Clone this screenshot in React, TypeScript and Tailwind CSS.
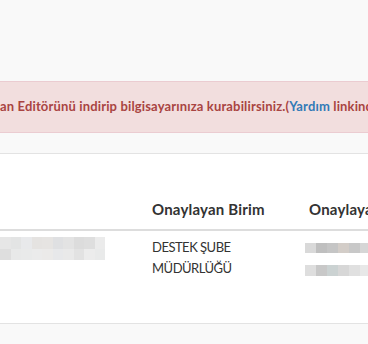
const blurA = [
  ["bg-[#e6e6e6]", "bg-[#e3e4e4]", "bg-[#e8e9eb]", "bg-[#e5e3e1]", "bg-[#e6e4e2]", "bg-[#dfe0e2]", "bg-[#e3e3e3]", "bg-[#dcdcdc]", "bg-[#dedede]", "bg-[#ebebeb]"],
  ["bg-[#dedede]", "bg-[#e8e9e9]", "bg-[#e9eaea]", "bg-[#ebebeb]", "bg-[#ebeae9]", "bg-[#e7e8ea]", "bg-[#e9e9e9]", "bg-[#e2e2e2]", "bg-[#ececec]", "bg-[#e9eaea]"],
];

const blurB = [
  ["bg-[#d9d9d9]", "bg-[#bfbfbf]", "bg-[#c5c5c5]", "bg-[#d3cdc8]", "bg-[#c8c8c8]", "bg-[#d6d6d6]"],
  ["bg-[#dedede]", "bg-[#c8c8c8]", "bg-[#cbd2d2]", "bg-[#d7d7d7]", "bg-[#e0e0e0]", "bg-[#e8e8e8]"],
];

function Blur({ rows, cell, h }: { rows: string[][]; cell: string; h: string }) {
  return (
    <div className="flex flex-col">
      {rows.map((r, i) => (
        <div key={i} className="flex">
          {r.map((c, j) => (
            <div key={j} className={`${cell} ${h} ${c}`} />
          ))}
        </div>
      ))}
    </div>
  );
}

export default function App() {
  return (
    <div className="min-h-[344px] w-full overflow-hidden bg-[#f9f9f9] font-['Lato','Liberation_Sans',sans-serif] text-[#333]">
      <div className="h-[81px]" />

      {/* uyarı */}
      <div className="flex h-[52px] items-center overflow-hidden whitespace-nowrap border-y border-[#ebccd1] bg-[#f2dede] text-[13px] font-bold tracking-[0.15px] text-[#a94442]">
        an Editörünü indirip bilgisayarınıza kurabilirsiniz.(
        <span className="text-[#337ab7]">Yardım</span>
        &nbsp;linkinden kurulum adımlarına ulaşabilirsiniz.)
      </div>

      <div className="h-[20px]" />

      {/* tablo paneli */}
      <div className="h-[171px] overflow-hidden border-y border-[#e3e3e3] bg-white pt-[45px]">
        <div className="flex whitespace-nowrap border-b-2 border-[#dddddd] pb-[10px] text-[15px] font-bold leading-[20px] tracking-[0.2px]">
          <div className="w-[144px] shrink-0" />
          <div className="w-[157px] shrink-0 pl-[8px]">Onaylayan Birim</div>
          <div className="shrink-0 pl-[8px]">Onaylayan Kişi</div>
        </div>
        <div className="flex text-[13px] leading-[21px] tracking-[-0.5px]">
          <div className="w-[144px] shrink-0 pt-[6px]">
            <Blur rows={blurA} cell="w-[10.5px]" h="h-[11.5px]" />
          </div>
          <div className="w-[157px] shrink-0 pl-[8px] pt-[6px]">
            <div>DESTEK ŞUBE</div>
            <div>MÜDÜRLÜĞÜ</div>
          </div>
          <div className="flex shrink-0 flex-col gap-[12px] pl-[4px] pt-[12px]">
            <Blur rows={[blurB[0]]} cell="w-[11px]" h="h-[10px]" />
            <Blur rows={[blurB[1]]} cell="w-[11px]" h="h-[11px]" />
          </div>
        </div>
      </div>
    </div>
  );
}
